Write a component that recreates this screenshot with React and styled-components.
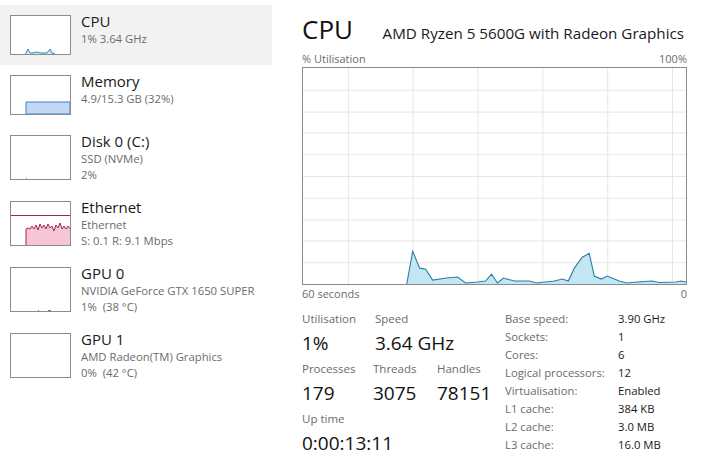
import React from 'react';
import styled, { createGlobalStyle } from 'styled-components';

const GlobalStyle = createGlobalStyle`
  html, body {
    margin: 0;
    padding: 0;
    background: #fff;
  }
  body {
    font-family: "Segoe UI", "Open Sans", "Noto Sans", sans-serif;
    color: #1a1a1a;
  }
`;

// chart samples, in the 384 x 218 box of the big graph
const cpuPoints = [
  [104, 218], [110, 185], [117, 202], [123, 203], [130, 214], [144, 212], [155, 211],
  [163, 217], [175, 216], [183, 215], [189, 208], [195, 217], [201, 212], [212, 215],
  [227, 215], [234, 217], [252, 215], [260, 213], [266, 215], [272, 202], [280, 191],
  [287, 187], [292, 210], [299, 213], [305, 210], [317, 215], [325, 217], [335, 216],
  [350, 215], [357, 216.5], [374, 216], [379, 215], [384, 216],
];

const toPath = (pts, w, h) => {
  const line = pts.map(([x, y], i) => `${i ? 'L' : 'M'}${x} ${y}`).join(' ');
  return {
    line,
    area: `${line} L${w} ${h} L${pts[0][0]} ${h} Z`,
  };
};

const resources = [
  {
    name: 'CPU', lines: ['1% 3.64 GHz'], selected: true, kind: 'cpu',
  },
  { name: 'Memory', lines: ['4.9/15.3 GB (32%)'], kind: 'memory' },
  { name: 'Disk 0 (C:)', lines: ['SSD (NVMe)', '2%'], kind: 'disk' },
  { name: 'Ethernet', lines: ['Ethernet', 'S: 0.1 R: 9.1 Mbps'], kind: 'ethernet' },
  { name: 'GPU 0', lines: ['NVIDIA GeForce GTX 1650 SUPER', '1%  (38 °C)'], kind: 'gpu0' },
  { name: 'GPU 1', lines: ['AMD Radeon(TM) Graphics', '0%  (42 °C)'], kind: 'gpu1' },
];

const ethPoints = [
  [15, 27], [17, 26], [19, 27], [21, 24], [23, 27], [25, 23], [27, 28], [29, 22],
  [31, 26], [33, 23], [35, 27], [37, 22], [39, 26], [41, 24], [43, 29], [45, 23],
  [47, 26], [49, 21], [51, 27], [53, 24], [55, 27], [57, 24], [60, 28],
];

function ThumbGraph({ kind, tall }) {
  const h = tall ? 43 : 38;
  let content = null;
  if (kind === 'cpu') {
    content = (
      <polyline
        points={`14,${h} 15,${h - 1} 17,${h - 5} 19,${h - 1} 22,${h - 1} 25,${h - 2} 30,${h - 1} 36,${h - 1} 39,${h - 5} 41,${h - 1} 44,${h}`}
        fill="#cfe9f6"
        stroke="#2a8bb5"
        strokeWidth="1"
      />
    );
  } else if (kind === 'memory') {
    content = (
      <path d={`M15 ${h} L15 26 L59 26 L59 ${h} Z`} fill="#c2d9f6" stroke="#3f7fcf" strokeWidth="1" />
    );
  } else if (kind === 'disk') {
    content = <line x1="15" y1={h - 1} x2="16" y2={h - 1} stroke="#7fae55" strokeWidth="1" />;
  } else if (kind === 'ethernet') {
    const { line, area } = toPath(ethPoints, 59, h);
    content = (
      <>
        <line x1="0" y1="13.5" x2="59" y2="13.5" stroke="#9c2751" strokeWidth="1" />
        <path d={`M15 ${h} L${area.slice(1)}`} fill="#f6c6d6" />
        <path d={`M15 ${h} L${line.slice(1)}`} fill="none" stroke="#a4264f" strokeWidth="1" />
      </>
    );
  } else if (kind === 'gpu0') {
    content = (
      <>
        <line x1="27" y1={h - 0.5} x2="28" y2={h - 0.5} stroke="#8d5bc2" strokeWidth="1" />
        <line x1="37" y1={h - 0.5} x2="40" y2={h - 0.5} stroke="#8d5bc2" strokeWidth="1" />
      </>
    );
  }
  return (
    <Thumb $tall={tall}>
      <svg width="59" height={h} viewBox={`0 0 59 ${h}`}>{content}</svg>
    </Thumb>
  );
}

function ResourceItem({ item }) {
  const tall = item.lines.length > 1;
  return (
    <Item $selected={item.selected} $tall={tall}>
      <ThumbGraph kind={item.kind} tall={tall} />
      <ItemText>
        <ItemName>{item.name}</ItemName>
        {item.lines.map((l) => <ItemSub key={l}>{l}</ItemSub>)}
      </ItemText>
    </Item>
  );
}

const vGrid = [45, 110, 175, 240, 305, 370];
const hGrid = [1, 2, 3, 4, 5, 6, 7, 8, 9].map((k) => Math.round(k * 21.8) + 0.5);

function CpuGraph() {
  const { line, area } = toPath(cpuPoints, 384, 218);
  return (
    <GraphBox>
      <svg width="383" height="216" viewBox="0 0 384 218" preserveAspectRatio="none">
        {vGrid.map((x) => (
          <line key={`v${x}`} x1={x + 0.5} y1="0" x2={x + 0.5} y2="218" stroke="#e6e6e6" />
        ))}
        {hGrid.map((y) => (
          <line key={`h${y}`} x1="0" y1={y} x2="384" y2={y} stroke="#e6e6e6" />
        ))}
        <path d={area} fill="#c3e6f5" />
        <path d={line} fill="none" stroke="#2f7e9c" strokeWidth="1.1" />
      </svg>
    </GraphBox>
  );
}

const specs = [
  ['Base speed:', '3.90 GHz'],
  ['Sockets:', '1'],
  ['Cores:', '6'],
  ['Logical processors:', '12'],
  ['Virtualisation:', 'Enabled'],
  ['L1 cache:', '384 KB'],
  ['L2 cache:', '3.0 MB'],
  ['L3 cache:', '16.0 MB'],
];

export default function App() {
  return (
    <>
      <GlobalStyle />
      <Window>
        <Sidebar>
          {resources.map((r) => <ResourceItem key={r.name} item={r} />)}
        </Sidebar>
        <Main>
          <Header>
            <Title>CPU</Title>
            <Model>AMD Ryzen 5 5600G with Radeon Graphics</Model>
          </Header>
          <AxisRow>
            <span>% Utilisation</span>
            <span>100%</span>
          </AxisRow>
          <CpuGraph />
          <AxisRow $below>
            <span>60 seconds</span>
            <span>0</span>
          </AxisRow>
          <Details>
            <Stats>
              <StatRow>
                <Stat $w={73}>
                  <StatLabel>Utilisation</StatLabel>
                  <StatValue>1%</StatValue>
                </Stat>
                <Stat>
                  <StatLabel>Speed</StatLabel>
                  <StatValue>3.64 GHz</StatValue>
                </Stat>
              </StatRow>
              <StatRow>
                <Stat $w={71}>
                  <StatLabel>Processes</StatLabel>
                  <StatValue>179</StatValue>
                </Stat>
                <Stat $w={64}>
                  <StatLabel>Threads</StatLabel>
                  <StatValue>3075</StatValue>
                </Stat>
                <Stat>
                  <StatLabel>Handles</StatLabel>
                  <StatValue>78151</StatValue>
                </Stat>
              </StatRow>
              <StatRow>
                <Stat>
                  <StatLabel>Up time</StatLabel>
                  <StatValue>0:00:13:11</StatValue>
                </Stat>
              </StatRow>
            </Stats>
            <SpecTable>
              {specs.map(([k, v]) => (
                <React.Fragment key={k}>
                  <SpecKey>{k}</SpecKey>
                  <SpecValue>{v}</SpecValue>
                </React.Fragment>
              ))}
            </SpecTable>
          </Details>
        </Main>
      </Window>
    </>
  );
}

const Window = styled.div`
  display: flex;
  width: 702px;
  height: 459px;
  overflow: hidden;
`;

const Sidebar = styled.div`
  width: 272px;
  padding-top: 5px;
  flex-shrink: 0;
`;

const Item = styled.div`
  display: flex;
  gap: 10px;
  height: ${(p) => (p.$tall ? 66 : 60)}px;
  box-sizing: border-box;
  padding: 10px 0 0 10px;
  background: ${(p) => (p.$selected ? '#f2f2f2' : 'transparent')};
`;

const Thumb = styled.div`
  width: 61px;
  height: ${(p) => (p.$tall ? 45 : 40)}px;
  box-sizing: border-box;
  border: 1px solid #8c8c8c;
  background: #fff;
  flex-shrink: 0;

  svg {
    display: block;
  }
`;

const ItemText = styled.div`
  margin-top: -3px;
`;

const ItemName = styled.div`
  font-size: 15px;
  line-height: 19px;
  color: #1a1a1a;
`;

const ItemSub = styled.div`
  font-size: 11.3px;
  line-height: 16px;
  color: #6b6b6b;
  white-space: pre;
`;

const Main = styled.div`
  width: 385px;
  padding: 12px 0 0 30px;
`;

const Header = styled.div`
  display: flex;
  align-items: baseline;
  justify-content: space-between;
  height: 39px;
  padding-right: 3px;
`;

const Title = styled.div`
  font-size: 26px;
  line-height: 34px;
  color: #111;
`;

const Model = styled.div`
  font-size: 15.2px;
  color: #1a1a1a;
`;

const AxisRow = styled.div`
  display: flex;
  justify-content: space-between;
  font-size: 11px;
  line-height: 16px;
  height: 16px;
  color: #6b6b6b;
  margin-top: ${(p) => (p.$below ? 1 : 0)}px;
`;

const GraphBox = styled.div`
  width: 385px;
  height: 218px;
  box-sizing: border-box;
  border: 1px solid #8a8a8a;

  svg {
    display: block;
  }
`;

const Details = styled.div`
  display: flex;
  margin-top: 8px;
`;

const Stats = styled.div`
  width: 203px;
  display: flex;
  flex-direction: column;
  gap: 4px;
`;

const StatRow = styled.div`
  display: flex;
`;

const Stat = styled.div`
  width: ${(p) => (p.$w ? `${p.$w}px` : 'auto')};
`;

const StatLabel = styled.div`
  font-size: 11.5px;
  line-height: 18px;
  color: #6b6b6b;
`;

const StatValue = styled.div`
  margin-top: 2px;
  font-size: 19px;
  line-height: 26px;
  color: #111;
`;

const SpecTable = styled.div`
  display: grid;
  grid-template-columns: 113px auto;
  grid-auto-rows: 18px;
  font-size: 11.3px;
  line-height: 18px;
`;

const SpecKey = styled.div`
  color: #6b6b6b;
`;

const SpecValue = styled.div`
  color: #1a1a1a;
`;
